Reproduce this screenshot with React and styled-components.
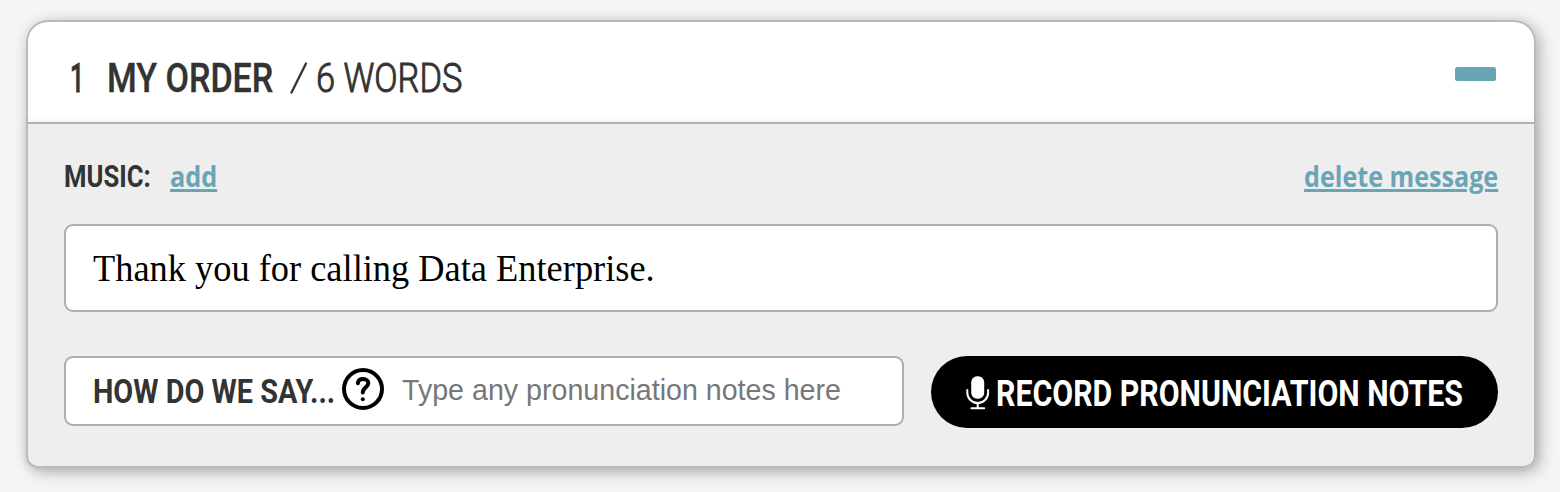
import { useLayoutEffect, useRef } from "react";
import styled, { createGlobalStyle } from "styled-components";

// Squeezes a line of text horizontally so it fills a given width
const Fit = ({ width, children }) => {
  const ref = useRef(null);

  useLayoutEffect(() => {
    ref.current.style.transform = `scaleX(${width / ref.current.offsetWidth})`;
  }, [width, children]);

  return (
    <FitBox $width={width}>
      <FitText ref={ref}>{children}</FitText>
    </FitBox>
  );
};

const App = () => {
  return (
    <>
      <GlobalStyle />
      <Page>
        <Card>
          <Header>
            <OrderNumber><Fit width={14}>1</Fit></OrderNumber>
            <Title><Fit width={166}>MY ORDER</Fit></Title>
            <Slash viewBox="0 0 18 32">
              <path d="M1.5 30.5L16 1.5" />
            </Slash>
            <WordCount><Fit width={146}>6 WORDS</Fit></WordCount>
            <Collapse aria-label="collapse" />
          </Header>
          <Body>
            <MusicRow>
              <MusicLabel><Fit width={87}>MUSIC:</Fit></MusicLabel>
              <Link><Fit width={47}>add</Fit></Link>
              <DeleteLink><Fit width={194}>delete message</Fit></DeleteLink>
            </MusicRow>
            <Message><Fit width={562}>Thank you for calling Data Enterprise.</Fit></Message>
            <NotesRow>
              <NotesField>
                <NotesLabel><Fit width={242}>HOW DO WE SAY...</Fit></NotesLabel>
                <HelpIcon viewBox="0 0 42 42">
                  <circle cx="21" cy="21" r="19" />
                  <path d="M15.9 15.2C16.2 12.4 18.3 11 21.1 11C24.2 11 26.3 12.8 26.3 15.3C26.3 19 20.8 19.7 20.8 24.5" />
                  <path d="M20.8 31.2v.1" />
                </HelpIcon>
                <Placeholder><Fit width={439}>Type any pronunciation notes here</Fit></Placeholder>
              </NotesField>
              <RecordButton>
                <MicIcon viewBox="0 0 24 34">
                  <rect x="5.2" y="0.2" width="13" height="22.6" rx="6" />
                  <path d="M1.3 14v2.7a10.4 10.4 0 0 0 20.8 0V14M11.7 27v5M5.4 32.2h12.8" />
                </MicIcon>
                <Fit width={467}>RECORD PRONUNCIATION NOTES</Fit>
              </RecordButton>
            </NotesRow>
          </Body>
        </Card>
      </Page>
    </>
  );
};

export default App;


const GlobalStyle = createGlobalStyle`
  * {
    box-sizing: border-box;
  }

  body {
    margin: 0;
    background: #f5f5f5;
    font-family: Roboto, sans-serif;
    color: #333;
  }
`;

const Page = styled.div`
  height: 492px;
  padding: 20px 24px 0 26px;
`;

const FitBox = styled.span`
  display: block;
  flex: none;
  width: ${({ $width }) => $width}px;
  white-space: nowrap;
  text-decoration: inherit;
`;

const FitText = styled.span`
  display: inline-block;
  transform-origin: left center;
  text-decoration: inherit;
`;

const Card = styled.div`
  height: 448px;
  border-radius: 22px 22px 12px 12px;
  box-shadow: 4px 4px 16px rgba(0, 0, 0, 0.26), 0 0 14px rgba(0, 0, 0, 0.05);
`;

const Header = styled.div`
  display: flex;
  align-items: center;
  height: 102px;
  padding: 12px 38px 0 42px;
  background: #fff;
  border: 2px solid #bababa;
  border-bottom: 0;
  border-radius: 22px 22px 0 0;
  font-size: 41px;
  line-height: 48px;
`;

const OrderNumber = styled.div`
  font-weight: 500;
  margin-right: 23px;
  -webkit-text-stroke: 0.8px #333;
`;

const Title = styled.div`
  font-weight: 500;
  margin-right: 17px;
  -webkit-text-stroke: 0.4px #333;
`;

const Slash = styled.svg`
  width: 18px;
  height: 32px;
  margin-right: 8px;
  fill: none;
  stroke: #333;
  stroke-width: 2.3;
  stroke-linecap: round;
`;

const WordCount = styled.div`
  font-weight: 300;
  -webkit-text-stroke: 1px #333;
`;

const Collapse = styled.button`
  width: 41.5px;
  height: 13.5px;
  margin: 0 0 8px auto;
  padding: 0;
  border: 0;
  border-radius: 2.5px;
  background: #69a5b5;
`;

const Body = styled.div`
  height: 346px;
  padding: 32px 36px 0;
  background: #eee;
  border: 2px solid #bababa;
  border-top-color: #b0b0b0;
  border-radius: 0 0 12px 12px;
  box-shadow: 0 0 8px rgba(0, 0, 0, 0.08);
`;

const MusicRow = styled.div`
  display: flex;
  align-items: center;
  height: 41px;
  font-size: 31px;
  line-height: 41px;
`;

const MusicLabel = styled.div`
  font-weight: 700;
  margin-right: 19px;
`;

const Link = styled.a`
  margin-bottom: 2px;
  font-family: "Open Sans", sans-serif;
  font-size: 29px;
  font-weight: 700;
  line-height: 39px;
  color: #69a5b5;
  text-decoration: underline 3px;
  text-underline-offset: 2px;
`;

const DeleteLink = styled(Link)`
  margin-left: auto;
`;

const Message = styled.div`
  display: flex;
  align-items: center;
  height: 88px;
  margin-top: 27px;
  padding: 0 27px;
  background: #fff;
  border: 2px solid #aeaeae;
  border-radius: 9px;
  font-family: "Liberation Serif", serif;
  font-size: 38px;
  color: #000;
`;

const NotesRow = styled.div`
  display: flex;
  align-items: flex-start;
  justify-content: space-between;
  margin-top: 44px;
`;

const NotesField = styled.div`
  display: flex;
  align-items: center;
  width: 840px;
  height: 70px;
  padding-left: 27px;
  background: #fff;
  border: 2px solid #aeaeae;
  border-radius: 9px;
`;

const NotesLabel = styled.div`
  font-size: 33.5px;
  font-weight: 700;
`;

const HelpIcon = styled.svg`
  width: 42px;
  height: 42px;
  margin: 0 18px 4px 7px;
  fill: none;
  stroke: #000;
  stroke-width: 4;
  stroke-linecap: round;
`;

const Placeholder = styled.div`
  margin-bottom: 2px;
  font-family: "Liberation Sans", sans-serif;
  font-size: 29px;
  color: #777;
`;

const RecordButton = styled.button`
  display: flex;
  align-items: center;
  width: 567px;
  height: 72px;
  padding: 3px 0 0 35px;
  border: 0;
  border-radius: 36px;
  background: #000;
  color: #fff;
  font-family: inherit;
  font-size: 36px;
  font-weight: 700;
  text-align: left;
`;

const MicIcon = styled.svg`
  width: 24px;
  height: 34px;
  margin: 0 6px 2px 0;
  fill: none;
  stroke: #fff;
  stroke-width: 2;
  stroke-linecap: round;

  rect {
    fill: #fff;
    stroke: none;
  }
`;
